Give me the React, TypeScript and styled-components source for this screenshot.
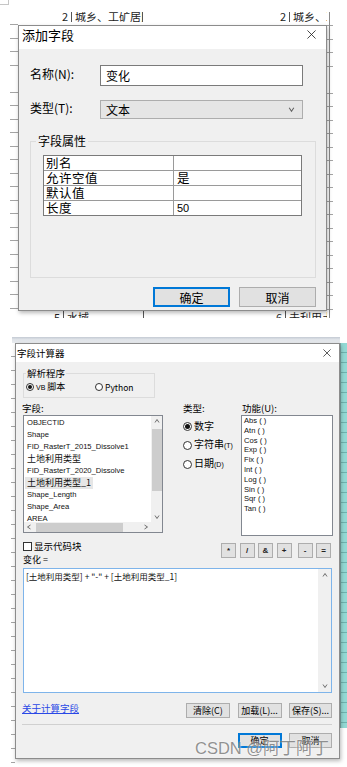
import React from 'react'
import styled, { createGlobalStyle } from 'styled-components'

const ui = `"Liberation Sans", "Noto Sans CJK SC", sans-serif`
const cjk = `"Noto Sans CJK SC", "Liberation Sans", sans-serif`

const GlobalStyle = createGlobalStyle`
  html, body { margin: 0; padding: 0; background: #fff; }
  body { font-family: ${ui}; color: #000; }
  * { box-sizing: border-box; }
`

const fields = [
  { name: 'OBJECTID' },
  { name: 'Shape' },
  { name: 'FID_RasterT_2015_Dissolve1' },
  { name: '土地利用类型', cn: true },
  { name: 'FID_RasterT_2020_Dissolve' },
  { name: '土地利用类型_1', cn: true, selected: true },
  { name: 'Shape_Length' },
  { name: 'Shape_Area' },
  { name: 'AREA' },
]

const funcs = ['Abs', 'Atn', 'Cos', 'Exp', 'Fix', 'Int', 'Log', 'Sin', 'Sqr', 'Tan']
const ops = ['*', '/', '&', '+', '-', '=']

const props = [
  ['别名', ''],
  ['允许空值', '是'],
  ['默认值', ''],
  ['长度', '50'],
]

const Chevron = ({ dir, size = 6 }: { dir: 'up' | 'down' | 'left' | 'right'; size?: number }) => {
  const d = {
    up: 'M1 4.5 L3 1.5 L5 4.5',
    down: 'M1 1.5 L3 4.5 L5 1.5',
    left: 'M4.5 1 L1.5 3 L4.5 5',
    right: 'M1.5 1 L4.5 3 L1.5 5',
  }[dir]
  return (
    <svg width={size} height={size} viewBox="0 0 6 6">
      <path d={d} stroke="#606060" strokeWidth="0.9" fill="none" />
    </svg>
  )
}

const CloseIcon = ({ size }: { size: number }) => (
  <svg width={size} height={size} viewBox="0 0 10 10">
    <path d="M0.5 0.5 L9.5 9.5 M9.5 0.5 L0.5 9.5" stroke="#1e1e1e" strokeWidth="0.9" fill="none" />
  </svg>
)

const App = () => {
  return (
    <Page>
      <GlobalStyle />
      <Corner />

      <TopShot>
        <SideRule $col={1} $gap={13.5} $offset={10} />
        <SideRule $col={3} $gap={13.5} $offset={1} $vline />
        <SheetRow $clip="top">
          <SheetCell $w={53} $right>2</SheetCell>
          <SheetCell $w={71} $sep>城乡、工矿居民用地</SheetCell>
          <SheetCell $w={147} $right $sep>2</SheetCell>
          <SheetCell $w={38} $sep>城乡、工矿</SheetCell>
        </SheetRow>

        <Window>
          <TitleBar $h={23} $size={13} $left={3} $right={10} $lift={6}>
            <span>添加字段</span>
            <CloseIcon size={9} />
          </TitleBar>
          <AddBody>
            <FormRow $mt={8}>
              <FormLabel>名称(N):</FormLabel>
              <TextBox>变化</TextBox>
            </FormRow>
            <FormRow $mt={14}>
              <FormLabel>类型(T):</FormLabel>
              <SelectBox>
                <span>文本</span>
                <Chevron dir="down" size={7} />
              </SelectBox>
            </FormRow>

            <GroupBox>
              <GroupCaption>字段属性</GroupCaption>
              <PropGrid>
                {props.map(([k, v], i) => (
                  <React.Fragment key={k}>
                    <PropCell $last={i === props.length - 1} $key>{k}</PropCell>
                    <PropCell $last={i === props.length - 1} $num={v === '50'}>{v}</PropCell>
                  </React.Fragment>
                ))}
              </PropGrid>
            </GroupBox>

            <ButtonRow $mt={9} $gap={9}>
              <DlgButton $w={77} $h={20} $size={12} $primary>确定</DlgButton>
              <DlgButton $w={77} $h={20} $size={12}>取消</DlgButton>
            </ButtonRow>
          </AddBody>
        </Window>

        <SheetRow $clip="bottom">
          <SheetCell $w={45} $right>5</SheetCell>
          <SheetCell $w={80} $sep>水域</SheetCell>
          <SheetCell $w={142} $right $sep>6</SheetCell>
          <SheetCell $w={42} $sep>未利用土地</SheetCell>
        </SheetRow>
      </TopShot>

      <BottomShot>
        <TopBand />
        <SideRule $col={1} $gap={14} $offset={1} $row="2 / -1" />
        <TealStrip />

        <Window>
          <TitleBar $h={18} $size={9.5} $left={1} $right={8}>
            <span>字段计算器</span>
            <CloseIcon size={8} />
          </TitleBar>
          <CalcBody>
            <ParserGroup>
              <SmallCaption>解析程序</SmallCaption>
              <RadioOption $w={69} $size={9}>
                <RadioDot $on $size={8} />
                <span><Tiny>VB</Tiny> 脚本</span>
              </RadioOption>
              <RadioOption $size={8.5}>
                <RadioDot $size={8} />
                <span>Python</span>
              </RadioOption>
            </ParserGroup>

            <CalcGrid>
              <ColLabel $indent={-1}>字段:</ColLabel>
              <ColLabel $indent={20}>类型:</ColLabel>
              <ColLabel $indent={1}>功能(U):</ColLabel>

              <FieldList>
                <FieldItems>
                  {fields.map(f => (
                    <FieldItem key={f.name} $cn={f.cn}>
                      <FieldText $selected={f.selected}>{f.name}</FieldText>
                    </FieldItem>
                  ))}
                </FieldItems>
                <VScroll>
                  <ArrowBox><Chevron dir="up" /></ArrowBox>
                  <VThumb />
                  <Spacer />
                  <ArrowBox><Chevron dir="down" /></ArrowBox>
                </VScroll>
                <HScroll>
                  <ArrowBox><Chevron dir="left" /></ArrowBox>
                  <HThumb />
                  <Spacer />
                  <ArrowBox><Chevron dir="right" /></ArrowBox>
                </HScroll>
                <ScrollCorner />
              </FieldList>

              <TypeColumn>
                <RadioOption $size={10} $gap={2}>
                  <RadioDot $on $size={9} />
                  <span>数字</span>
                </RadioOption>
                <RadioOption $size={10} $gap={2}>
                  <RadioDot $size={9} />
                  <span>字符串<Tiny>(T)</Tiny></span>
                </RadioOption>
                <RadioOption $size={10} $gap={2}>
                  <RadioDot $size={9} />
                  <span>日期<Tiny>(D)</Tiny></span>
                </RadioOption>
              </TypeColumn>

              <FuncList>
                {funcs.map(f => (
                  <FuncItem key={f}>{f} (&nbsp;)</FuncItem>
                ))}
              </FuncList>
            </CalcGrid>

            <OpRow>
              <CheckOption>
                <CheckBox />
                <span>显示代码块</span>
              </CheckOption>
              <OpGroup>
                {ops.map(o => (
                  <OpButton key={o} $wide={o === '-'}>{o}</OpButton>
                ))}
              </OpGroup>
            </OpRow>

            <ExprLabel>变化 =</ExprLabel>
            <ExprBox>
              <ExprText>[土地利用类型] + "-" + [土地利用类型_1]</ExprText>
              <ExprScroll>
                <Chevron dir="up" />
                <Chevron dir="down" />
              </ExprScroll>
            </ExprBox>

            <LinkRow>
              <HelpLink>关于计算字段</HelpLink>
              <ButtonRow $gap={7.5}>
                <DlgButton $w={44} $h={15} $size={9}>清除(C)</DlgButton>
                <DlgButton $w={44} $h={15} $size={9}>加载(L)...</DlgButton>
                <DlgButton $w={43} $h={15} $size={9}>保存(S)...</DlgButton>
              </ButtonRow>
            </LinkRow>

            <Separator />

            <ButtonRow $mt={8} $gap={7.5}>
              <DlgButton $w={44} $h={15} $size={9} $primary>确定</DlgButton>
              <DlgButton $w={43} $h={15} $size={9}>取消</DlgButton>
            </ButtonRow>
          </CalcBody>
        </Window>

        <Watermark>CSDN @阿丁阿丁</Watermark>
      </BottomShot>
    </Page>
  )
}

export default App

const Page = styled.div`
width: 347px;
height: 767px;
overflow: hidden;
background: #fff;
`
const Corner = styled.div`
width: 9px;
height: 5px;
border-right: 1px solid #c6c6c6;
border-bottom: 1px solid #c6c6c6;
`
const TopShot = styled.div`
margin: 7px 0 0 10px;
width: 323px;
display: grid;
grid-template-columns: 8px 309px 6px;
grid-template-rows: 13px 286px 7px;
`
const BottomShot = styled.div`
position: relative;
margin: 19px 0 0 11px;
width: 336px;
height: 430px;
display: grid;
grid-template-columns: 4px 325px 7px;
grid-template-rows: 6px 416px 8px;
`
const SideRule = styled.div<{ $col: number; $gap: number; $offset: number; $vline?: boolean; $row?: string }>`
grid-column: ${p => p.$col};
grid-row: ${p => p.$row || '1 / -1'};
background:
  ${p => p.$vline ? 'linear-gradient(to right, transparent 2px, #8a8a8a 2px, #8a8a8a 3px, transparent 3px),' : ''}
  repeating-linear-gradient(to bottom, transparent 0, transparent ${p => p.$gap - 1}px, #a4a4a4 ${p => p.$gap - 1}px, #a4a4a4 ${p => p.$gap}px);
background-position: 0 0, 0 ${p => p.$offset}px;
`
const TopBand = styled.div`
grid-column: 1 / 3;
grid-row: 1;
margin-left: 1px;
background: linear-gradient(#c3cad3, #dfe3e8 40%, #e9ecef);
`
const TealStrip = styled.div`
grid-column: 3;
grid-row: 2;
height: 385px;
border-left: 1px solid #7fa8a6;
background:
  repeating-linear-gradient(to bottom, transparent 0, transparent 9px, #6fb3ae 9px, #6fb3ae 10px),
  #93d9d4;
`
const SheetRow = styled.div<{ $clip: 'top' | 'bottom' }>`
grid-column: 2;
display: flex;
overflow: hidden;
align-items: ${p => p.$clip === 'top' ? 'flex-end' : 'flex-start'};
padding-bottom: ${p => p.$clip === 'top' ? 3 : 0}px;
font-family: ${cjk};
font-size: 11px;
line-height: 12px;
color: #222;
`
const SheetCell = styled.div<{ $w: number; $right?: boolean; $sep?: boolean }>`
flex: none;
width: ${p => p.$w}px;
white-space: nowrap;
overflow: hidden;
text-align: ${p => p.$right ? 'right' : 'left'};
padding: 0 3px;
border-left: ${p => p.$sep ? '1px solid #555' : 'none'};
`
const Window = styled.div`
grid-column: 2;
grid-row: 2;
position: relative;
z-index: 1;
display: flex;
flex-direction: column;
background: #f0f0f0;
border: 1px solid #8c8c8c;
box-shadow: 1px 2px 4px rgba(0, 0, 0, 0.28);
`
const TitleBar = styled.div<{ $h: number; $size: number; $left: number; $right: number; $lift?: number }>`
height: ${p => p.$h}px;
flex: none;
display: flex;
align-items: center;
justify-content: space-between;
padding: 0 ${p => p.$right}px ${p => p.$lift || 0}px ${p => p.$left}px;
background: #fff;
font-family: ${cjk};
font-size: ${p => p.$size}px;
color: #000;
`
const AddBody = styled.div`
flex: 1;
display: flex;
flex-direction: column;
padding: 8px 10px 0 11px;
font-family: ${cjk};
`
const FormRow = styled.div<{ $mt: number }>`
display: flex;
align-items: center;
margin-top: ${p => p.$mt}px;
`
const FormLabel = styled.div`
width: 70px;
font-size: 12px;
line-height: 14px;
margin-top: -3px;
`
const TextBox = styled.div`
width: 203px;
height: 21px;
display: flex;
align-items: center;
padding-left: 5px;
background: #fff;
border: 1px solid #7a7a7a;
font-size: 12px;
`
const SelectBox = styled.div`
width: 203px;
height: 19px;
display: flex;
align-items: center;
justify-content: space-between;
padding: 0 7px 0 5px;
background: #e5e5e5;
border: 1px solid #adadad;
font-size: 12px;
`
const GroupBox = styled.div`
position: relative;
margin-top: 22px;
height: 137px;
padding: 13px 0 0 12px;
border: 1px solid #dcdcdc;
`
const GroupCaption = styled.div`
position: absolute;
top: -8px;
left: 5px;
padding: 0 2px;
background: #f0f0f0;
font-size: 12px;
line-height: 14px;
`
const PropGrid = styled.div`
width: 259px;
display: grid;
grid-template-columns: 130px 1fr;
border: 1px solid #7a7a7a;
background: #fff;
`
const PropCell = styled.div<{ $last?: boolean; $key?: boolean; $num?: boolean }>`
height: ${p => p.$last ? 14 : 15}px;
padding-left: ${p => p.$key ? 2 : 3}px;
border-bottom: ${p => p.$last ? 'none' : '1px solid #9a9a9a'};
border-right: ${p => p.$key ? '1px solid #9a9a9a' : 'none'};
font-family: ${p => p.$num ? ui : cjk};
font-size: ${p => p.$num ? 11 : 12.5}px;
line-height: 14px;
letter-spacing: ${p => p.$key ? 0.5 : 0}px;
`
const ButtonRow = styled.div<{ $mt?: number; $gap: number }>`
display: flex;
justify-content: flex-end;
gap: ${p => p.$gap}px;
margin-top: ${p => p.$mt || 0}px;
`
const DlgButton = styled.div<{ $w: number; $h: number; $size: number; $primary?: boolean }>`
width: ${p => p.$w}px;
height: ${p => p.$h}px;
display: flex;
align-items: center;
justify-content: center;
background: #e1e1e1;
border: 1px solid ${p => p.$primary ? '#0078d7' : '#adadad'};
box-shadow: ${p => p.$primary ? 'inset 0 0 0 1px #0078d7' : 'none'};
font-family: ${cjk};
font-size: ${p => p.$size}px;
color: #000;
white-space: nowrap;
`
const CalcBody = styled.div`
flex: 1;
display: flex;
flex-direction: column;
padding: 0 7px 10px 7px;
font-family: ${cjk};
`
const ParserGroup = styled.div`
position: relative;
margin-top: 11px;
width: 132px;
height: 25px;
display: flex;
align-items: flex-start;
padding: 7px 0 0 2px;
border: 1px solid #dcdcdc;
`
const SmallCaption = styled.div`
position: absolute;
top: -6px;
left: 2px;
padding: 0 1px;
background: #f0f0f0;
font-size: 9.5px;
line-height: 10px;
`
const RadioOption = styled.div<{ $w?: number; $size: number; $gap?: number }>`
display: flex;
align-items: center;
gap: ${p => p.$gap ?? 2}px;
width: ${p => p.$w ? `${p.$w}px` : 'auto'};
height: 12px;
font-size: ${p => p.$size}px;
line-height: 12px;
white-space: nowrap;
`
const RadioDot = styled.span<{ $on?: boolean; $size: number }>`
position: relative;
flex: none;
width: ${p => p.$size}px;
height: ${p => p.$size}px;
border-radius: 50%;
border: 1px solid #333;
background: #fff;
&::after {
  content: '';
  display: ${p => p.$on ? 'block' : 'none'};
  position: absolute;
  inset: 1px;
  border-radius: 50%;
  background: #111;
}
`
const Tiny = styled.span`
font-family: ${ui};
font-size: 7px;
`
const CalcGrid = styled.div`
display: grid;
grid-template-columns: 140px 78px 91px;
grid-template-rows: 12px auto;
margin-top: 5px;
`
const ColLabel = styled.div<{ $indent: number }>`
margin-left: ${p => p.$indent}px;
font-size: 9.5px;
line-height: 10px;
`
const FieldList = styled.div`
height: 118px;
display: grid;
grid-template-columns: 1fr 11px;
grid-template-rows: 1fr 10px;
background: #fff;
border: 1px solid #828790;
`
const FieldItems = styled.div`
overflow: hidden;
padding: 1px 0 0 3px;
`
const FieldItem = styled.div<{ $cn?: boolean }>`
height: 12px;
line-height: 12px;
white-space: nowrap;
font-family: ${p => p.$cn ? cjk : ui};
font-size: ${p => p.$cn ? 9 : 7.6}px;
color: #111;
`
const FieldText = styled.span<{ $selected?: boolean }>`
display: inline-block;
margin-left: -2px;
padding: 0 2px;
background: ${p => p.$selected ? '#e6e6e6' : 'transparent'};
`
const VScroll = styled.div`
display: flex;
flex-direction: column;
align-items: center;
background: #f0f0f0;
`
const HScroll = styled.div`
display: flex;
align-items: center;
background: #f0f0f0;
`
const ArrowBox = styled.div`
width: 10px;
height: 10px;
flex: none;
display: flex;
align-items: center;
justify-content: center;
`
const VThumb = styled.div`
margin-top: 3px;
width: 10px;
height: 62px;
background: #cdcdcd;
`
const HThumb = styled.div`
margin-left: 2px;
width: 87px;
height: 9px;
background: #cdcdcd;
`
const Spacer = styled.div`
flex: 1;
`
const ScrollCorner = styled.div`
background: #f0f0f0;
`
const TypeColumn = styled.div`
display: flex;
flex-direction: column;
gap: 7px;
padding: 5px 0 0 20px;
`
const FuncList = styled.div`
width: 92px;
height: 121px;
padding: 0 0 0 2px;
background: #fff;
border: 1px solid #828790;
`
const FuncItem = styled.div`
height: 9.8px;
line-height: 9.8px;
font-family: ${ui};
font-size: 7.6px;
color: #111;
white-space: nowrap;
`
const OpRow = styled.div`
display: flex;
align-items: flex-start;
justify-content: space-between;
height: 15px;
margin-top: 7px;
`
const CheckOption = styled.div`
display: flex;
align-items: center;
gap: 2px;
margin-top: -2px;
font-size: 9.5px;
line-height: 10px;
`
const CheckBox = styled.span`
width: 9px;
height: 9px;
border: 1px solid #333;
background: #fff;
`
const OpGroup = styled.div`
display: flex;
gap: 3.5px;
margin-right: 1px;
`
const OpButton = styled.div<{ $wide?: boolean }>`
width: 15px;
height: 15px;
margin-left: ${p => p.$wide ? 2.5 : 0}px;
display: flex;
align-items: center;
justify-content: center;
background: #e1e1e1;
border: 1px solid #adadad;
font-family: ${ui};
font-size: 8px;
font-weight: bold;
color: #222;
`
const ExprLabel = styled.div`
margin-top: -3px;
font-size: 9px;
line-height: 10px;
`
const ExprBox = styled.div`
margin-top: 3px;
height: 125px;
display: grid;
grid-template-columns: 1fr 13px;
background: #fff;
border: 1px solid #7eb4ea;
`
const ExprText = styled.div`
padding: 1px 0 0 2px;
font-size: 8.5px;
line-height: 12px;
color: #111;
white-space: nowrap;
`
const ExprScroll = styled.div`
display: flex;
flex-direction: column;
align-items: center;
justify-content: space-between;
padding: 3px 0;
background: #f0f0f0;
`
const LinkRow = styled.div`
display: flex;
align-items: flex-start;
justify-content: space-between;
height: 15px;
margin-top: 10px;
`
const HelpLink = styled.a`
margin-left: -1px;
font-size: 9.5px;
line-height: 11px;
color: #2a48e6;
text-decoration: underline;
cursor: pointer;
`
const Separator = styled.div`
margin: 6px 0 0 -1px;
height: 1px;
background: #d0d0d0;
`
const Watermark = styled.div`
position: absolute;
left: 184px;
top: 401px;
z-index: 2;
font-family: ${ui};
font-size: 16.5px;
line-height: 20px;
color: rgba(105, 105, 105, 0.72);
text-shadow: 0 0 2px rgba(255, 255, 255, 0.9);
white-space: nowrap;
pointer-events: none;
`
